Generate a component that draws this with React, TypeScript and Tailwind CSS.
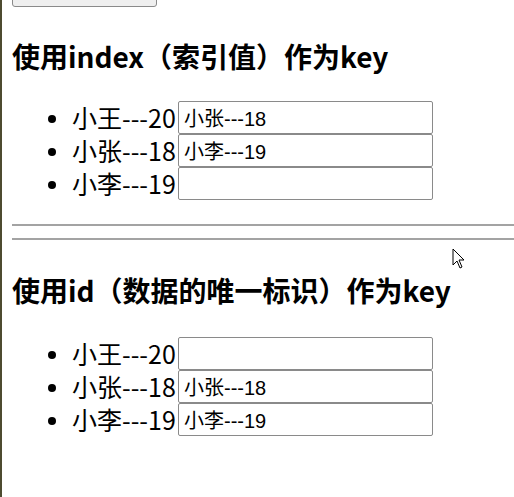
type Row = { label: string; value: string };

const byIndex: Row[] = [
  { label: "小王---20", value: "小张---18" },
  { label: "小张---18", value: "小李---19" },
  { label: "小李---19", value: "" },
];

const byId: Row[] = [
  { label: "小王---20", value: "" },
  { label: "小张---18", value: "小张---18" },
  { label: "小李---19", value: "小李---19" },
];

function List({ rows, className }: { rows: Row[]; className: string }) {
  return (
    <ul className={className + " pl-[36px]"}>
      {rows.map((r) => (
        <li key={r.label} className="flex items-center h-[33px]">
          <span className="w-[8px] h-[8px] rounded-full bg-black mr-[16px] mt-[2px]" />
          <span className="text-[25px] leading-none text-black w-[106px] whitespace-nowrap">
            {r.label}
          </span>
          <input
            readOnly
            value={r.value}
            className="w-[255px] h-[33px] border border-[#8a8a8a] rounded-[2px] bg-white px-[5px] text-[20px] text-black outline-none font-['Liberation_Sans','Noto_Sans_CJK_SC',sans-serif]"
          />
        </li>
      ))}
    </ul>
  );
}

export default function App() {
  return (
    <div className="relative w-[514px] h-[497px] overflow-hidden bg-white border-l-2 border-[#4d4b30] font-['Noto_Sans_CJK_SC',sans-serif]">
      <div className="pl-[10px]">
        <button className="block w-[145px] h-[32px] -mt-[25px] border border-[#8a8a8a] rounded-[3px] bg-[#efefef]" />
        <h3 className="mt-[30px] h-[38px] leading-[38px] text-[28px] font-bold text-black whitespace-nowrap">
          使用index（索引值）作为key
        </h3>
        <List rows={byIndex} className="mt-[26px]" />
        <hr className="mt-[24px] border-0 border-t-2 border-[#a3a3a3]" />
        <hr className="mt-[12px] border-0 border-t-2 border-[#a3a3a3]" />
        <h3 className="mt-[31px] h-[38px] leading-[38px] text-[28px] font-bold text-black whitespace-nowrap">
          使用id（数据的唯一标识）作为key
        </h3>
        <List rows={byId} className="mt-[28px]" />
      </div>
      <svg
        className="absolute left-[450px] top-[248px]"
        width="14"
        height="22"
        viewBox="0 0 14 22"
      >
        <path
          d="M1 1 L1 17 L5 13 L8 20 L10 19 L7 12 L12 12 Z"
          fill="white"
          stroke="black"
          strokeWidth="1"
          strokeLinejoin="round"
        />
      </svg>
    </div>
  );
}
